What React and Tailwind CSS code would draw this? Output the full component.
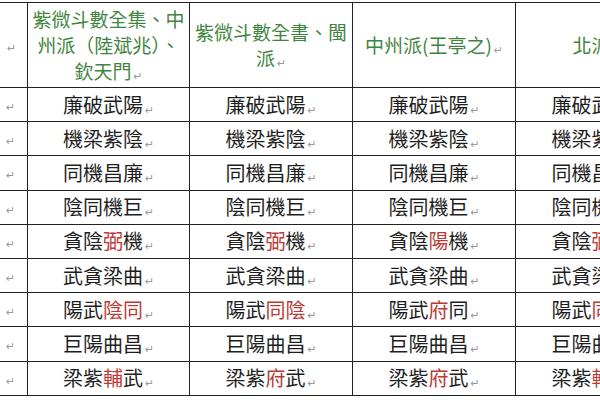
const RED = "text-[#bd3b36]";

const headers = [
  "紫微斗數全集、中州派（陸斌兆）、欽天門",
  "紫微斗數全書、閩派",
  "中州派(王亭之)",
  "北派",
];

// each cell: [text, indexes of red characters]
const rows = [
  [["廉破武陽", []], ["廉破武陽", []], ["廉破武陽", []], ["廉破武陽", []]],
  [["機梁紫陰", []], ["機梁紫陰", []], ["機梁紫陰", []], ["機梁紫陰", []]],
  [["同機昌廉", []], ["同機昌廉", []], ["同機昌廉", []], ["同機昌廉", []]],
  [["陰同機巨", []], ["陰同機巨", []], ["陰同機巨", []], ["陰同機巨", []]],
  [["貪陰弼機", [2]], ["貪陰弼機", [2]], ["貪陰陽機", [2]], ["貪陰弼機", [2]]],
  [["武貪梁曲", []], ["武貪梁曲", []], ["武貪梁曲", []], ["武貪梁曲", []]],
  [["陽武陰同", [2, 3]], ["陽武同陰", [2, 3]], ["陽武府同", [2]], ["陽武同陰", [2, 3]]],
  [["巨陽曲昌", []], ["巨陽曲昌", []], ["巨陽曲昌", []], ["巨陽曲昌", []]],
  [["梁紫輔武", [2]], ["梁紫府武", [2]], ["梁紫府武", [2]], ["梁紫輔武", [2]]],
];

function Mark() {
  return (
    <span className="inline-block align-middle text-[11px] leading-none text-[#9a9a9a] font-['DejaVu_Sans',sans-serif] ml-[2px] translate-y-[3px]">
      ↵
    </span>
  );
}

function Cell({ text, red }) {
  return (
    <div className="flex items-center justify-center border-r border-b border-[#222] text-[20px] leading-none text-[#1e1e1e]">
      <span>
        {text.split("").map((ch, i) => (
          <span key={i} className={red.includes(i) ? RED : ""}>
            {ch}
          </span>
        ))}
        <Mark />
      </span>
    </div>
  );
}

export default function App() {
  return (
    <div className="w-[600px] h-[400px] overflow-hidden bg-white font-['Noto_Sans_CJK_TC','Noto_Sans_CJK_SC',sans-serif]">
      <div className="mt-[2px] grid w-[680px] grid-cols-[28px_162px_163px_163px_163px] grid-rows-[85px_repeat(9,34.2px)] border-t border-[#222]">
        <div className="flex items-center border-r border-b border-[#222] pl-[5px]">
          <Mark />
        </div>
        {headers.map((h, i) => (
          <div
            key={i}
            className="flex items-center justify-center border-r border-b border-[#222] px-[4px] text-center text-[19px] leading-[26px] text-[#3f8540]"
          >
            <span>
              {h}
              <Mark />
            </span>
          </div>
        ))}
        {rows.map((r, ri) => (
          <div key={ri} className="contents">
            <div className="flex items-center border-r border-b border-[#222] pl-[4px]">
              <Mark />
            </div>
            {r.map(([t, red], ci) => (
              <Cell key={ci} text={t} red={red} />
            ))}
          </div>
        ))}
      </div>
    </div>
  );
}
